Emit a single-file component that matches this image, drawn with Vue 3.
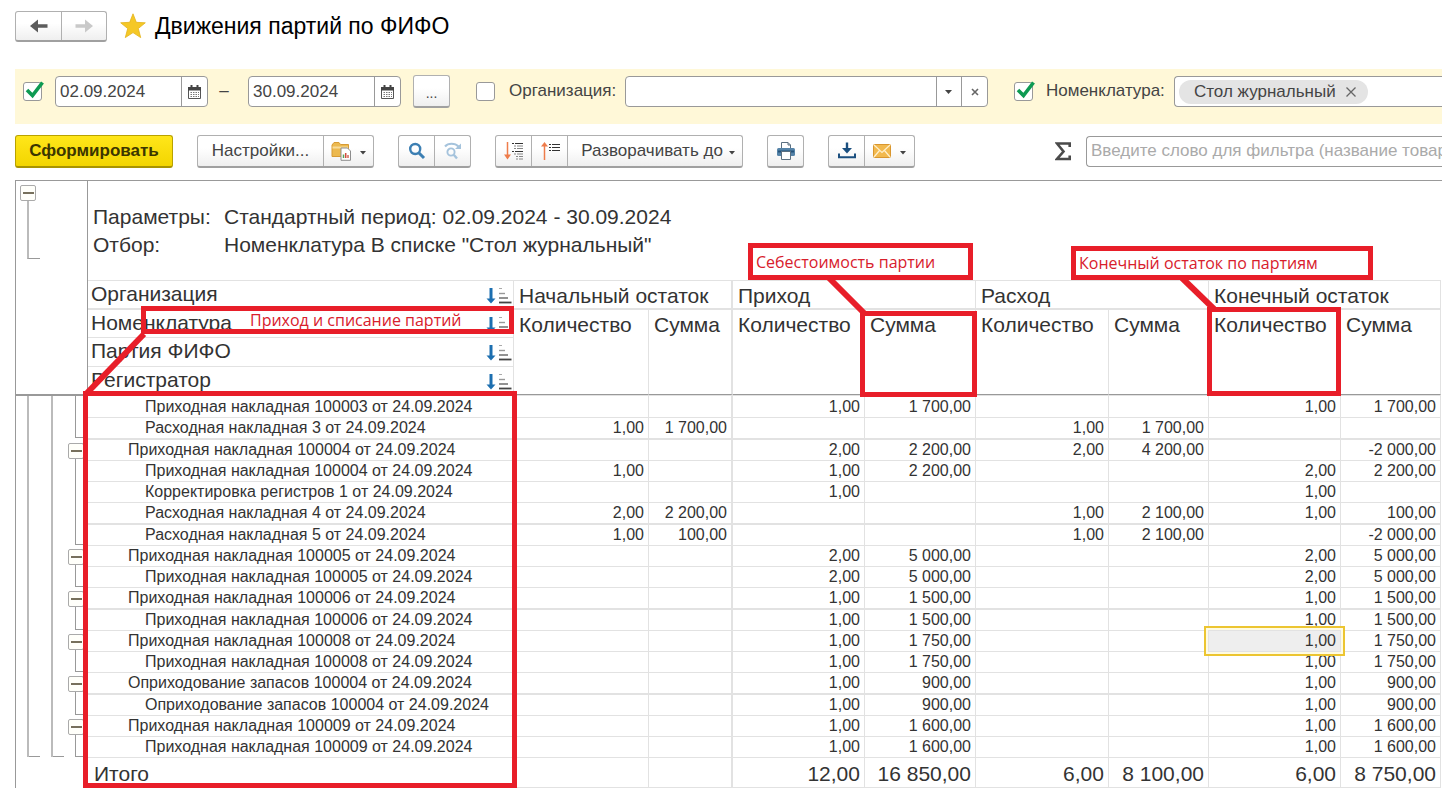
<script setup>
import { ref } from 'vue'

const dateFrom = ref('02.09.2024')
const dateTo = ref('30.09.2024')
const usePeriod = ref(true)
const useOrg = ref(false)
const useItem = ref(true)

const headers = ['Организация', 'Номенклатура', 'Партия ФИФО', 'Регистратор']
const groups = ['Начальный остаток', 'Приход', 'Расход', 'Конечный остаток']

const rows = [
  { t: 'Приходная накладная 100003 от 24.09.2024', v: ['', '', '1,00', '1 700,00', '', '', '1,00', '1 700,00'] },
  { t: 'Расходная накладная 3 от 24.09.2024', end: true, v: ['1,00', '1 700,00', '', '', '1,00', '1 700,00', '', ''] },
  { t: 'Приходная накладная 100004 от 24.09.2024', g: true, v: ['', '', '2,00', '2 200,00', '2,00', '4 200,00', '', '-2 000,00'] },
  { t: 'Приходная накладная 100004 от 24.09.2024', v: ['1,00', '', '1,00', '2 200,00', '', '', '2,00', '2 200,00'] },
  { t: 'Корректировка регистров 1 от 24.09.2024', v: ['', '', '1,00', '', '', '', '1,00', ''] },
  { t: 'Расходная накладная 4 от 24.09.2024', v: ['2,00', '2 200,00', '', '', '1,00', '2 100,00', '1,00', '100,00'] },
  { t: 'Расходная накладная 5 от 24.09.2024', end: true, v: ['1,00', '100,00', '', '', '1,00', '2 100,00', '', '-2 000,00'] },
  { t: 'Приходная накладная 100005 от 24.09.2024', g: true, v: ['', '', '2,00', '5 000,00', '', '', '2,00', '5 000,00'] },
  { t: 'Приходная накладная 100005 от 24.09.2024', end: true, v: ['', '', '2,00', '5 000,00', '', '', '2,00', '5 000,00'] },
  { t: 'Приходная накладная 100006 от 24.09.2024', g: true, v: ['', '', '1,00', '1 500,00', '', '', '1,00', '1 500,00'] },
  { t: 'Приходная накладная 100006 от 24.09.2024', end: true, v: ['', '', '1,00', '1 500,00', '', '', '1,00', '1 500,00'] },
  { t: 'Приходная накладная 100008 от 24.09.2024', g: true, sel: 6, v: ['', '', '1,00', '1 750,00', '', '', '1,00', '1 750,00'] },
  { t: 'Приходная накладная 100008 от 24.09.2024', end: true, v: ['', '', '1,00', '1 750,00', '', '', '1,00', '1 750,00'] },
  { t: 'Оприходование запасов 100004 от 24.09.2024', g: true, v: ['', '', '1,00', '900,00', '', '', '1,00', '900,00'] },
  { t: 'Оприходование запасов 100004 от 24.09.2024', end: true, v: ['', '', '1,00', '900,00', '', '', '1,00', '900,00'] },
  { t: 'Приходная накладная 100009 от 24.09.2024', g: true, v: ['', '', '1,00', '1 600,00', '', '', '1,00', '1 600,00'] },
  { t: 'Приходная накладная 100009 от 24.09.2024', end: true, v: ['', '', '1,00', '1 600,00', '', '', '1,00', '1 600,00'] },
]
const totals = ['', '', '12,00', '16 850,00', '6,00', '8 100,00', '6,00', '8 750,00']
</script>

<template>
  <div class="page">
    <header class="titlebar">
      <div class="group nav">
        <button type="button" aria-label="Назад">
          <svg width="18" height="14" viewBox="0 0 18 14"><path d="M0 7 8 0.5V5.3H17.500V8.700H8V13.500Z" fill="#5c5c5c" /></svg>
        </button>
        <button type="button" aria-label="Вперёд" disabled>
          <svg width="18" height="14" viewBox="0 0 18 14"><path d="M18 7 10 0.5V5.300H0.500V8.700H10V13.500Z" fill="#c9c9c9" /></svg>
        </button>
      </div>
      <svg class="star" width="26" height="26" viewBox="0 0 26 26"><path d="M13 .8 16.300 9.300 25.300 9.800 18.300 15.500 20.700 24.600 13 19.600 5.300 24.600 7.700 15.500 .7 9.800 9.700 9.300Z" fill="#f5c826" stroke="#e3b21a" stroke-width=".8" /></svg>
      <h1>Движения партий по ФИФО</h1>
    </header>

    <section class="filters">
      <label class="check period">
        <input v-model="usePeriod" type="checkbox" aria-label="Период" />
        <svg v-if="usePeriod" width="20" height="18" viewBox="0 0 20 18"><path d="M2 9 7.500 14.500 17.500 1.500" fill="none" stroke="#0d9a52" stroke-width="3.600" /></svg>
      </label>
      <div class="field date">
        <input v-model="dateFrom" type="text" aria-label="Начало периода" />
        <button type="button" aria-label="Выбрать дату">
          <svg width="13" height="14" viewBox="0 0 13 14"><path d="M.5 3.500V13.500H12.500V3.500Z" fill="#fff" stroke="#555" /><path d="M0 2H13V5.500H0ZM2.500 0H4.500V3H2.500ZM8.500 0H10.500V3H8.500Z" fill="#444" /><path d="M2.500 7.500H11M2.500 9.500H11M2.500 11.500H11" stroke="#777" stroke-dasharray="1.500 1" /></svg>
        </button>
      </div>
      <span class="dash">–</span>
      <div class="field date">
        <input v-model="dateTo" type="text" aria-label="Конец периода" />
        <button type="button" aria-label="Выбрать дату">
          <svg width="13" height="14" viewBox="0 0 13 14"><path d="M.5 3.500V13.500H12.500V3.500Z" fill="#fff" stroke="#555" /><path d="M0 2H13V5.500H0ZM2.500 0H4.500V3H2.500ZM8.500 0H10.500V3H8.500Z" fill="#444" /><path d="M2.500 7.500H11M2.500 9.500H11M2.500 11.500H11" stroke="#777" stroke-dasharray="1.500 1" /></svg>
        </button>
      </div>
      <div class="group more"><button type="button">...</button></div>
      <label class="check org">
        <input v-model="useOrg" type="checkbox" aria-label="Отбор по организации" />
        <svg v-if="useOrg" width="20" height="18" viewBox="0 0 20 18"><path d="M2 9 7.500 14.500 17.500 1.500" fill="none" stroke="#0d9a52" stroke-width="3.600" /></svg>
      </label>
      <label class="caption org-caption" for="org">Организация:</label>
      <div class="field org-field">
        <select id="org"><option></option></select>
        <svg class="arrow" width="25" height="29" viewBox="0 0 25 29"><path d="M.5 0V29" stroke="#999" /><path d="M9 13H16L12.500 17Z" fill="#444" /></svg>
        <button type="button" aria-label="Очистить"><svg width="8" height="8" viewBox="0 0 8 8"><path d="M1 1 7 7M7 1 1 7" stroke="#666" stroke-width="1.600" /></svg></button>
      </div>
      <label class="check item">
        <input v-model="useItem" type="checkbox" aria-label="Отбор по номенклатуре" />
        <svg v-if="useItem" width="20" height="18" viewBox="0 0 20 18"><path d="M2 9 7.500 14.500 17.500 1.500" fill="none" stroke="#0d9a52" stroke-width="3.600" /></svg>
      </label>
      <span class="caption item-caption">Номенклатура:</span>
      <div class="field item-field">
        <span class="chip">Стол журнальный
          <button type="button" aria-label="Убрать"><svg width="10" height="10" viewBox="0 0 10 10"><path d="M.5 .5 9.500 9.500M9.500 .5 .5 9.500" stroke="#666" stroke-width="1.300" /></svg></button>
        </span>
      </div>
    </section>

    <section class="toolbar">
      <button type="button" class="primary">Сформировать</button>
      <div class="group">
        <button type="button" class="w-settings">Настройки...</button>
        <button type="button" class="w-menu" aria-label="Варианты отчёта">
          <svg width="20" height="20" viewBox="0 0 20 20"><path d="M1 15.500V4L3 1.500H8L9.500 3.500H17.500V15.500Z" fill="#ecb94f" stroke="#d79b34" /><path d="M1.500 6.500H17" stroke="#f8dc9a" stroke-width="2" /><path d="M10 7H16.500L19.500 10V19.300H10Z" fill="#fff" stroke="#8d8d8d" /><path d="M12.500 17V13.500" stroke="#58a05c" stroke-width="1.500" /><path d="M14.700 17V12" stroke="#d14b3c" stroke-width="1.500" /><path d="M17 17V14" stroke="#d14b3c" stroke-width="1.300" /></svg>
          <svg class="caret" width="6" height="4" viewBox="0 0 6 4"><path d="M0 0H6L3 3.500Z" fill="#444" /></svg>
        </button>
      </div>
      <div class="group">
        <button type="button" class="w-icon" aria-label="Найти">
          <svg width="18" height="18" viewBox="0 0 18 18"><circle cx="7.200" cy="7" r="5" fill="none" stroke="#3c7fb3" stroke-width="2.400" /><path d="M11 11 16 16" stroke="#3c7fb3" stroke-width="3" /></svg>
        </button>
        <button type="button" class="w-icon" aria-label="Найти далее">
          <svg width="18" height="18" viewBox="0 0 18 18"><g fill="none" stroke="#a5c3dc"><circle cx="7" cy="10" r="3.600" stroke-width="1.900" /><path d="M9.700 12.700 13 16.500" stroke-width="2.400" /><path d="M1 4.500C4 .8 11 .8 14.500 4.500" stroke-width="2" /></g><path d="M17 1.500V7H11Z" fill="#a5c3dc" /></svg>
        </button>
      </div>
      <div class="group">
        <button type="button" class="w-icon" aria-label="Развернуть группы">
          <svg width="20" height="18" viewBox="0 0 20 18"><path d="M3.500 0V14" stroke="#ee7c4b" stroke-width="1.500" /><path d="M0 12.500H7L3.500 17.500Z" fill="#ee7c4b" /><path d="M8 1.500H10M11 1.500H19M8 9.500H10M11 9.500H19" stroke="#333" stroke-width="1.200" /><path d="M10 4H12M13 4H19M10 6.500H12M13 6.500H19M10 12H12M13 12H19M12 14.500H14M15 14.500H19M12 17H14M15 17H19" stroke="#888" /></svg>
        </button>
        <button type="button" class="w-icon" aria-label="Свернуть группы">
          <svg width="20" height="18" viewBox="0 0 20 18"><path d="M4.500 3V18" stroke="#ee7c4b" stroke-width="1.500" /><path d="M1 4.500H8L4.500 0Z" fill="#ee7c4b" /><path d="M9 2.500H11M12 2.500H20M9 5.500H11M12 5.500H20M9 8.500H11M12 8.500H20" stroke="#333" stroke-width="1.200" /></svg>
        </button>
        <button type="button" class="w-expand">Разворачивать до
          <svg class="caret" width="6" height="4" viewBox="0 0 6 4"><path d="M0 0H6L3 3.500Z" fill="#444" /></svg>
        </button>
      </div>
      <div class="group">
        <button type="button" class="w-icon" aria-label="Печать">
          <svg width="18" height="18" viewBox="0 0 18 18"><path d="M4.500 7V.5H11L13.500 3V7" fill="#fff" stroke="#5b6f80" /><path d="M11 .5V3H13.500" fill="none" stroke="#5b6f80" /><rect x="0" y="6" width="18" height="8" rx="1.500" fill="#5583a8" /><path d="M1 9.500H17" stroke="#24527a" stroke-width="2" /><path d="M4.500 9.500H13.500V17.500H4.500Z" fill="#fff" stroke="#5b6f80" /></svg>
        </button>
      </div>
      <div class="group">
        <button type="button" class="w-icon" aria-label="Сохранить">
          <svg width="18" height="17" viewBox="0 0 18 17"><path d="M9 .5V8" stroke="#1b4f7f" stroke-width="2.400" /><path d="M4 6H14L9 11.500Z" fill="#1b4f7f" /><path d="M1 11.500V15.300H17V11.500" fill="none" stroke="#1b4f7f" stroke-width="2" /></svg>
        </button>
        <button type="button" class="w-menu" aria-label="Отправить">
          <svg width="18" height="14" viewBox="0 0 18 14"><rect x=".5" y=".5" width="17" height="13" rx="1" fill="#f2b94e" stroke="#d9962e" /><path d="M1 1 9 8.500 17 1M1 13 6.500 6.500M17 13 11.500 6.500" fill="none" stroke="#fff0cd" stroke-width="1.200" /></svg>
          <svg class="caret" width="6" height="4" viewBox="0 0 6 4"><path d="M0 0H6L3 3.500Z" fill="#444" /></svg>
        </button>
      </div>
      <svg class="sigma" width="16" height="19" viewBox="0 0 16 19"><path d="M14.700 5V1.500H2L8.500 9.500 2 17H14.700V13.500" fill="none" stroke="#4a4a4a" stroke-width="2.600" /></svg>
      <div class="field search"><input type="text" aria-label="Фильтр" placeholder="Введите слово для фильтра (название товара, покупателя и пр.)" /></div>
    </section>

    <main class="report">
      <div class="gutter">
        <div class="gutter-head">
          <button type="button" class="toggle" aria-label="Свернуть параметры"></button>
          <span class="bracket"></span>
        </div>
        <div
          v-for="(r, i) in rows"
          :key="i"
          class="rail"
          :class="{ first: i === 0, tall: i % 4 === 1, node: r.g, end: r.end, last: i === rows.length - 1 }"
        >
          <button v-if="r.g" type="button" class="toggle" aria-label="Свернуть группу"></button>
          <span v-else class="branch"></span>
        </div>
      </div>

      <div class="sheet">
        <dl class="params">
          <dt>Параметры:</dt>
          <dd>Стандартный период: 02.09.2024 - 30.09.2024</dd>
          <dt>Отбор:</dt>
          <dd>Номенклатура В списке "Стол журнальный"</dd>
        </dl>
        <table>
          <colgroup>
            <col />
            <col class="c135" /><col class="c84" /><col class="c132" /><col class="c111" />
            <col class="c133" /><col class="c100" /><col class="c132" /><col class="c100" />
          </colgroup>
          <thead>
            <tr v-for="(h, i) in headers" :key="h" :class="'h' + i">
              <th scope="col" class="dim">
                <div>
                  <span>{{ h }}</span>
                  <svg width="26" height="17" viewBox="0 0 26 17"><path d="M5 0V12" stroke="#1c6fb0" stroke-width="3" /><path d="M.5 10.500H9.500L5 15.500Z" fill="#1c6fb0" /><path d="M13 .5H16" stroke="#aaa" /><path d="M13 5.500H19" stroke="#999" stroke-width="1.400" /><path d="M13 10H22" stroke="#777" stroke-width="1.600" /><path d="M13 14.500H25.500" stroke="#444" stroke-width="1.800" /></svg>
                </div>
              </th>
              <template v-if="i === 0">
                <th v-for="g in groups" :key="g" colspan="2" scope="colgroup" class="grp">{{ g }}</th>
              </template>
              <template v-if="i === 1">
                <th v-for="n in 8" :key="n" rowspan="3" scope="col" class="sub">{{ n % 2 ? 'Количество' : 'Сумма' }}</th>
              </template>
            </tr>
          </thead>
          <tbody>
            <tr v-for="(r, i) in rows" :key="i" :class="{ first: i === 0, tall: i % 4 === 1 }">
              <td class="name" :class="{ parent: r.g }">{{ r.t }}</td>
              <td v-for="(v, j) in r.v" :key="j" class="num" :class="{ selected: r.sel === j }">{{ v }}</td>
            </tr>
          </tbody>
          <tfoot>
            <tr>
              <td class="total-name">Итого</td>
              <td v-for="(v, j) in totals" :key="j" class="num">{{ v }}</td>
            </tr>
          </tfoot>
        </table>
      </div>

      <div class="frame frame-docs"></div>
      <div class="frame frame-cost"></div>
      <div class="frame frame-rest"></div>
      <svg class="link link-docs" width="64" height="66" viewBox="0 0 64 66"><path d="M3 63 60 4" stroke="#e81e29" stroke-width="6" /></svg>
      <svg class="link link-cost" width="44" height="42" viewBox="0 0 44 42"><path d="M4 3 40 39" stroke="#e81e29" stroke-width="6" /></svg>
      <svg class="link link-rest" width="40" height="36" viewBox="0 0 40 36"><path d="M4 3 36 34" stroke="#e81e29" stroke-width="6" /></svg>
      <div class="frame note note-docs">Приход и списание партий</div>
      <div class="frame note note-cost">Себестоимость партии</div>
      <div class="frame note note-rest">Конечный остаток по партиям</div>
    </main>
  </div>
</template>

<style>
body {
  background: #fff;
  overflow: hidden;
}
</style>

<style scoped>
* {
  box-sizing: border-box;
}
.page {
  font-family: "Liberation Sans", Arial, sans-serif;
  font-size: 17px;
  color: #444;
  padding-left: 15px;
  overflow: hidden;
}
button,
input,
select {
  font: inherit;
  color: inherit;
  margin: 0;
}
svg {
  display: block;
  flex: none;
}
.titlebar {
  display: flex;
  align-items: center;
  height: 69px;
  padding-bottom: 17px;
}
h1 {
  margin: 0 0 0 9px;
  font-size: 23px;
  line-height: 28px;
  font-weight: 400;
  color: #000;
  white-space: nowrap;
}
.star {
  margin-left: 13px;
}
.group {
  display: flex;
  flex: none;
  height: 33px;
  border: 1px solid #b0b0b0;
  border-bottom: 2px solid #a0a0a0;
  border-radius: 3px;
  background: linear-gradient(#fff 40%, #efefef);
}
.group button {
  display: flex;
  align-items: center;
  justify-content: center;
  border: 0;
  padding: 0;
  background: none;
  white-space: nowrap;
}
.group button + button {
  border-left: 1px solid #b0b0b0;
}
.nav {
  height: 31px;
}
.nav button {
  width: 45px;
}
.filters {
  display: flex;
  align-items: flex-start;
  height: 55px;
  padding: 7px 0 0 8px;
  background: #fff8d8;
  white-space: nowrap;
}
.check {
  position: relative;
  flex: none;
  width: 19px;
  height: 19px;
  margin-top: 6px;
}
.check input {
  display: block;
  appearance: none;
  width: 19px;
  height: 19px;
  border: 1px solid #999;
  border-radius: 3px;
  background: #fff;
}
.check svg {
  position: absolute;
  left: 2px;
  top: -1px;
}
.field {
  position: relative;
  display: flex;
  flex: none;
  height: 31px;
  border: 1px solid #999;
  border-radius: 4px;
  background: #fff;
  overflow: hidden;
}
.field input,
.field select {
  flex: 1;
  min-width: 0;
  border: 0;
  padding: 0 0 0 4px;
  background: none;
  outline: none;
  appearance: none;
}
.field > button {
  display: flex;
  align-items: center;
  justify-content: center;
  width: 26px;
  padding: 0;
  border: 0;
  border-left: 1px solid #999;
  background: none;
}
.date {
  width: 153px;
}
.period {
  margin-right: 13px;
}
.dash {
  width: 40px;
  padding-top: 5px;
  text-align: center;
  line-height: 20px;
  padding-right: 8px;
}
.more {
  margin: -1px 26px 0 12px;
}
.more button {
  width: 35px;
  padding-top: 4px;
  font-size: 14px;
}
.caption {
  padding-top: 5px;
  line-height: 20px;
  flex: none;
}
.org-caption {
  width: 116px;
  margin-left: 14px;
}
.org-field {
  width: 363px;
}
.arrow {
  position: absolute;
  right: 26px;
  top: 0;
  pointer-events: none;
}
.item {
  margin-left: 26px;
}
.item-caption {
  width: 128px;
  margin-left: 13px;
}
.item-field {
  flex: 1 0 auto;
  border-right: 0;
  border-radius: 4px 0 0 4px;
  padding: 3px 4px;
}
.chip {
  display: flex;
  align-items: center;
  gap: 10px;
  height: 24px;
  padding: 0 12px 0 15px;
  border-radius: 12px;
  background: #e4e4e4;
}
.chip button {
  border: 0;
  padding: 0;
  background: none;
}
.toolbar {
  display: flex;
  align-items: center;
  gap: 24px;
  height: 56px;
  padding-bottom: 2px;
}
.primary {
  flex: none;
  width: 158px;
  height: 33px;
  padding: 0;
  border: 1px solid #b9a200;
  border-bottom: 2px solid #a89300;
  border-radius: 3px;
  background: linear-gradient(#ffe61a, #f3d500);
  font-weight: 700;
  color: #3c3600;
}
.w-settings {
  width: 125px;
}
.w-menu {
  width: 50px;
  gap: 9px;
}
.w-icon {
  width: 35px;
}
.group .w-icon + .w-icon {
  width: 36px;
}
.group .w-expand {
  width: 175px;
  gap: 6px;
  padding-left: 6px;
}
.caret {
  margin-top: 4px;
}
.sigma {
  margin-left: auto;
}
.search {
  width: 356px;
  margin-left: -9px;
  border-right: 0;
  border-radius: 4px 0 0 4px;
}
.search input::placeholder {
  color: #aaa;
  opacity: 1;
}
.report {
  position: relative;
  display: flex;
  border-top: 1px solid #999;
  border-left: 1px solid #999;
  color: #333;
}
.gutter {
  flex: none;
  width: 72px;
}
.gutter-head {
  height: 215px;
  padding: 4px 0 0 4px;
  border-right: 1px solid #999;
  border-bottom: 2px solid #999;
}
.toggle {
  display: block;
  width: 16px;
  height: 16px;
  padding: 0;
  border: 1px solid #aaa;
  border-radius: 2px;
  background: linear-gradient(#77705c, #77705c) center / 11px 2px no-repeat, #fffffa;
}
.bracket {
  display: block;
  width: 13px;
  height: 58px;
  margin-left: 7px;
  border-left: 2px solid #bbb;
  border-bottom: 1px solid #999;
}
.rail {
  display: flex;
  align-items: center;
  height: 21px;
  padding-left: 52px;
  background:
    linear-gradient(#bbb, #bbb) 11px 0 / 2px 100% no-repeat,
    linear-gradient(#bbb, #bbb) 35px 0 / 2px 100% no-repeat;
}
.rail.first {
  height: 22px;
}
.rail.tall {
  height: 22px;
}
.branch {
  width: 9px;
  height: 100%;
  margin-left: 7px;
  border-left: 1px solid #999;
}
.end .branch {
  align-self: flex-start;
  height: 20px;
  border-bottom: 1px solid #999;
}
.rail.node {
  background:
    linear-gradient(#bbb, #bbb) 11px 0 / 2px 100% no-repeat,
    linear-gradient(#bbb, #bbb) 35px 0 / 2px 100% no-repeat,
    linear-gradient(#999, #999) 59px 15px / 1px 100% no-repeat;
}
.rail.last {
  background:
    linear-gradient(#bbb, #bbb) 11px 0 / 2px 20px no-repeat,
    linear-gradient(#bbb, #bbb) 35px 0 / 2px 20px no-repeat,
    linear-gradient(#999, #999) 11px 19px / 13px 1px no-repeat,
    linear-gradient(#999, #999) 35px 19px / 13px 1px no-repeat;
}
.sheet {
  flex: 1;
  min-width: 0;
  padding-right: 1px;
}
.params {
  display: grid;
  grid-template-columns: 131px 1fr;
  align-content: start;
  height: 99px;
  margin: 0;
  padding: 22px 0 0 5px;
  font-size: 21px;
  line-height: 28px;
  white-space: nowrap;
}
.params dd {
  margin: 0;
}
table {
  width: 100%;
  table-layout: fixed;
  border-collapse: separate;
  border-spacing: 0;
}
.c84 { width: 84px; }
.c100 { width: 100px; }
.c111 { width: 111px; }
.c132 { width: 132px; }
.c133 { width: 133px; }
.c135 { width: 135px; }
th,
td {
  padding: 0;
  border: 0 solid #e2e2e2;
  border-right-width: 1px;
  border-bottom-width: 1px;
  font-weight: 400;
  text-align: left;
  white-space: nowrap;
}
th {
  font-size: 21px;
  line-height: 24px;
}
.h0 th {
  height: 30px;
  border-top-width: 1px;
  border-bottom-width: 2px;
}
.h1 .dim {
  height: 28px;
}
.h2 .dim {
  height: 29px;
}
.h3 .dim {
  height: 28px;
}
.h3 .dim,
.sub {
  border-bottom-color: #999;
}
.dim {
  padding-bottom: 2px;
}
.dim div {
  display: flex;
  align-items: center;
  justify-content: space-between;
  padding: 0 1px 0 3px;
}
.dim svg {
  margin-top: 5px;
}
.grp {
  padding: 2px 0 0 5px;
}
.sub {
  padding: 3px 0 0 5px;
  vertical-align: top;
}
th.grp:nth-child(2),
th.sub:nth-child(3),
td:nth-child(3) {
  border-right-width: 2px;
}
td {
  height: 21px;
  font-size: 16px;
  line-height: 18px;
}
.first td {
  height: 23px;
  border-top-width: 1px;
}
.tall td {
  height: 22px;
  border-bottom-width: 2px;
}
.name {
  padding-left: 57px;
}
.parent {
  padding-left: 40px;
}
.num {
  text-align: right;
  padding-right: 4px;
}
.selected {
  position: relative;
  background: #eee;
}
.selected::after {
  content: "";
  position: absolute;
  inset: -5px -5px -5px -5px;
  border: 2px solid #ecc531;
  box-shadow: inset 0 0 0 2px #fffbe2;
}
tfoot td {
  height: 30px;
  font-size: 21px;
  line-height: 24px;
  padding-right: 5px;
  padding-top: 3px;
}
.total-name {
  padding-left: 6px;
}
.frame {
  position: absolute;
  border: 5px solid #e81e29;
}
.frame-docs {
  left: 67px;
  right: 925px;
  top: 210px;
  bottom: 0;
}
.frame-cost {
  right: 465px;
  top: 130px;
  width: 117px;
  height: 86px;
}
.frame-rest {
  right: 101px;
  top: 126px;
  width: 134px;
  height: 89px;
}
.link {
  position: absolute;
}
.link-docs {
  left: 68px;
  top: 149px;
}
.link-cost {
  right: 573px;
  top: 94px;
}
.link-rest {
  right: 224px;
  top: 94px;
}
.note {
  display: flex;
  align-items: center;
  font-family: "Open Sans", "Noto Sans", sans-serif;
  font-size: 16px;
  line-height: 18px;
  color: #d8202c;
  white-space: nowrap;
}
.note-docs {
  left: 125px;
  right: 928px;
  top: 125px;
  height: 28px;
  padding-left: 104px;
}
.note-cost {
  right: 469px;
  top: 62px;
  width: 225px;
  height: 37px;
  padding-left: 3px;
}
.note-rest {
  right: 69px;
  top: 65px;
  width: 302px;
  height: 34px;
  padding-left: 3px;
}
</style>
